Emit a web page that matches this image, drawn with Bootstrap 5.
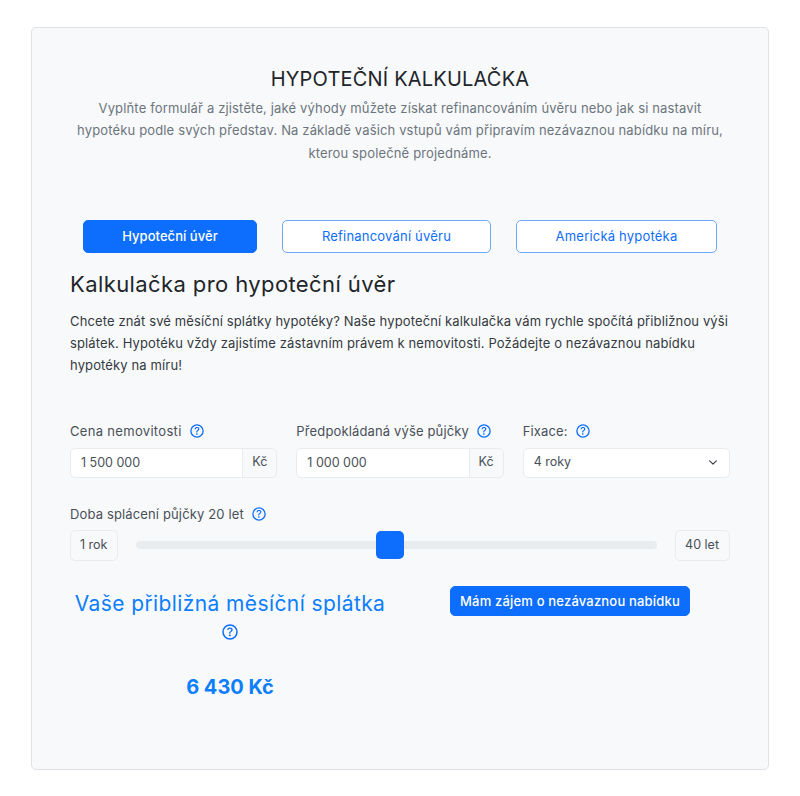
<!DOCTYPE html>
<html lang="cs">
<head>
<meta charset="utf-8">
<title>Hypoteční kalkulačka</title>
<link href="https://cdn.jsdelivr.net/npm/bootstrap@5.3.0/dist/css/bootstrap.min.css" rel="stylesheet">
<style>
body{font-family:Inter,"Liberation Sans",sans-serif;font-size:13px;background:#fff;color:#495057}
.calc-shell{margin:27px 31px;height:743px;background:#f8f9fb;border:1px solid #dfe1e4;border-radius:5px;padding:37px 38px 0}
.calc-title{font-size:20px;font-weight:400;line-height:28px;color:#212529;margin:0 0 4px;letter-spacing:.2px}
.calc-lead{font-size:13px;line-height:22.4px;letter-spacing:.15px;color:#6c757d;margin:0 0 56px}
.tab-row{gap:25px;margin-bottom:16px}
.tab-btn{font-size:13px;letter-spacing:.2px;height:33px;padding:0;line-height:31px;border-radius:5px;border-color:#6ea8fe;color:#0d6efd;background:#fff;font-weight:400}
.tab-btn.active{background:#0d6efd;border-color:#0d6efd;color:#fff;font-weight:500;letter-spacing:.05px}
.w-a{width:174px}.w-b{width:209px}.w-c{width:201px}
.calc-sub{font-size:22px;font-weight:400;line-height:30px;color:#212529;margin:0 0 11px;letter-spacing:.4px}
.calc-text{font-size:13px;line-height:22px;letter-spacing:.13px;color:#343a40;margin:0 0 44.6px}
.fields{--bs-gutter-x:19px;margin-bottom:26px}
.fld-label{font-size:13px;letter-spacing:.14px;line-height:20px;color:#495057;margin-bottom:7px;display:flex;align-items:center;gap:8px}
.lbl-wide{letter-spacing:.32px}
.term-label{margin-bottom:6px}
.qmark{width:14px;height:14px;flex:none;color:#0d6efd}
.fld-input,.fld-unit,.fld-select,.range-end{font-size:12.5px;color:#495057;border-color:#e9ecef}
.fld-input,.fld-select{height:30px;padding:0 10px;background-color:#fff;border-radius:5px}
.fld-unit{background:#f8f9fa;padding:0 9px;border-radius:5px}
.fld-select{background-position:right 10px center;background-size:12px 9px;padding-right:30px}
.range-end{height:31px;display:flex;align-items:center;padding:0 10px 0 9px;background:#f8f9fa;border:1px solid #e9ecef;border-radius:5px}
.range-wrap{gap:18px;margin-bottom:25px}
.loan-range{height:30px;flex:1}
.loan-range::-webkit-slider-runnable-track{height:8px;background:#e9ecef;border-radius:4px}
.loan-range::-webkit-slider-thumb{width:28px;height:28px;margin-top:-10px;background:#0d6efd;border-radius:5px}
.out-row{--bs-gutter-x:20px}
.out-title{font-size:21px;font-weight:400;line-height:35px;color:#0d7efd;margin:0;letter-spacing:.4px}
.out-q{width:16px;height:16px;display:block;margin:3px auto 0}
.out-sum{font-size:20px;font-weight:700;color:#0d7efd;line-height:30px;margin:32px 0 0}
.cta{font-size:13px;letter-spacing:.18px;font-weight:500;height:30px;line-height:28px;padding:0;width:240px;border-radius:5px;background:#0d6efd}
</style>
</head>
<body>
<svg width="0" height="0" class="d-block" aria-hidden="true"><symbol id="q" viewBox="0 0 16 16"><circle cx="8" cy="8" r="7" fill="none" stroke="currentColor" stroke-width="1.5"/><path fill="currentColor" d="M5.255 5.786a.237.237 0 0 0 .241.247h.825c.138 0 .248-.113.266-.25.09-.656.54-1.134 1.342-1.134.686 0 1.314.343 1.314 1.168 0 .635-.374.927-.965 1.371-.673.489-1.206 1.06-1.168 1.987l.003.217a.25.25 0 0 0 .25.246h.811a.25.25 0 0 0 .25-.25v-.105c0-.718.273-.927 1.01-1.486.609-.463 1.244-.977 1.244-2.056 0-1.511-1.276-2.241-2.673-2.241-1.267 0-2.655.59-2.75 2.286zm1.557 5.763c0 .533.425.927 1.01.927.609 0 1.028-.394 1.028-.927 0-.552-.42-.94-1.029-.94-.584 0-1.009.388-1.009.94z"/></symbol></svg>
<main class="calc-shell">
  <header class="text-center">
    <h1 class="calc-title">HYPOTEČNÍ KALKULAČKA</h1>
    <p class="calc-lead">Vyplňte formulář a zjistěte, jaké výhody můžete získat refinancováním úvěru nebo jak si nastavit<br>hypotéku podle svých představ. Na základě vašich vstupů vám připravím nezávaznou nabídku na míru,<br>kterou společně projednáme.</p>
  </header>
  <div class="d-flex justify-content-center tab-row">
    <button type="button" class="btn tab-btn w-a active">Hypoteční úvěr</button>
    <button type="button" class="btn tab-btn w-b">Refinancování úvěru</button>
    <button type="button" class="btn tab-btn w-c">Americká hypotéka</button>
  </div>
  <h2 class="calc-sub">Kalkulačka pro hypoteční úvěr</h2>
  <p class="calc-text">Chcete znát své měsíční splátky hypotéky? Naše hypoteční kalkulačka vám rychle spočítá přibližnou výši<br>splátek. Hypotéku vždy zajistíme zástavním právem k nemovitosti. Požádejte o nezávaznou nabídku<br>hypotéky na míru!</p>
  <div class="row fields">
    <div class="col-4">
      <label class="fld-label lbl-wide" for="price">Cena nemovitosti <svg class="qmark"><use href="#q"/></svg></label>
      <div class="input-group"><input id="price" class="form-control fld-input" value="1 500 000"><span class="input-group-text fld-unit">Kč</span></div>
    </div>
    <div class="col-4">
      <label class="fld-label" for="loan">Předpokládaná výše půjčky <svg class="qmark"><use href="#q"/></svg></label>
      <div class="input-group"><input id="loan" class="form-control fld-input" value="1 000 000"><span class="input-group-text fld-unit">Kč</span></div>
    </div>
    <div class="col-4">
      <label class="fld-label" for="fix">Fixace: <svg class="qmark"><use href="#q"/></svg></label>
      <select id="fix" class="form-select fld-select"><option>4 roky</option></select>
    </div>
  </div>
  <label class="fld-label term-label" for="term">Doba splácení půjčky 20 let <svg class="qmark"><use href="#q"/></svg></label>
  <div class="d-flex align-items-center range-wrap">
    <span class="range-end">1 rok</span>
    <input id="term" type="range" class="form-range loan-range" min="1" max="40" value="20">
    <span class="range-end">40 let</span>
  </div>
  <div class="row out-row">
    <div class="col-6 text-center">
      <h3 class="out-title">Vaše přibližná měsíční splátka</h3>
      <svg class="out-q text-primary"><use href="#q"/></svg>
      <p class="out-sum">6 430 Kč</p>
    </div>
    <div class="col-6 text-center">
      <button type="button" class="btn btn-primary cta">Mám zájem o nezávaznou nabídku</button>
    </div>
  </div>
</main>
<script src="https://cdn.jsdelivr.net/npm/bootstrap@5.3.0/dist/js/bootstrap.bundle.min.js"></script>
</body>
</html>
